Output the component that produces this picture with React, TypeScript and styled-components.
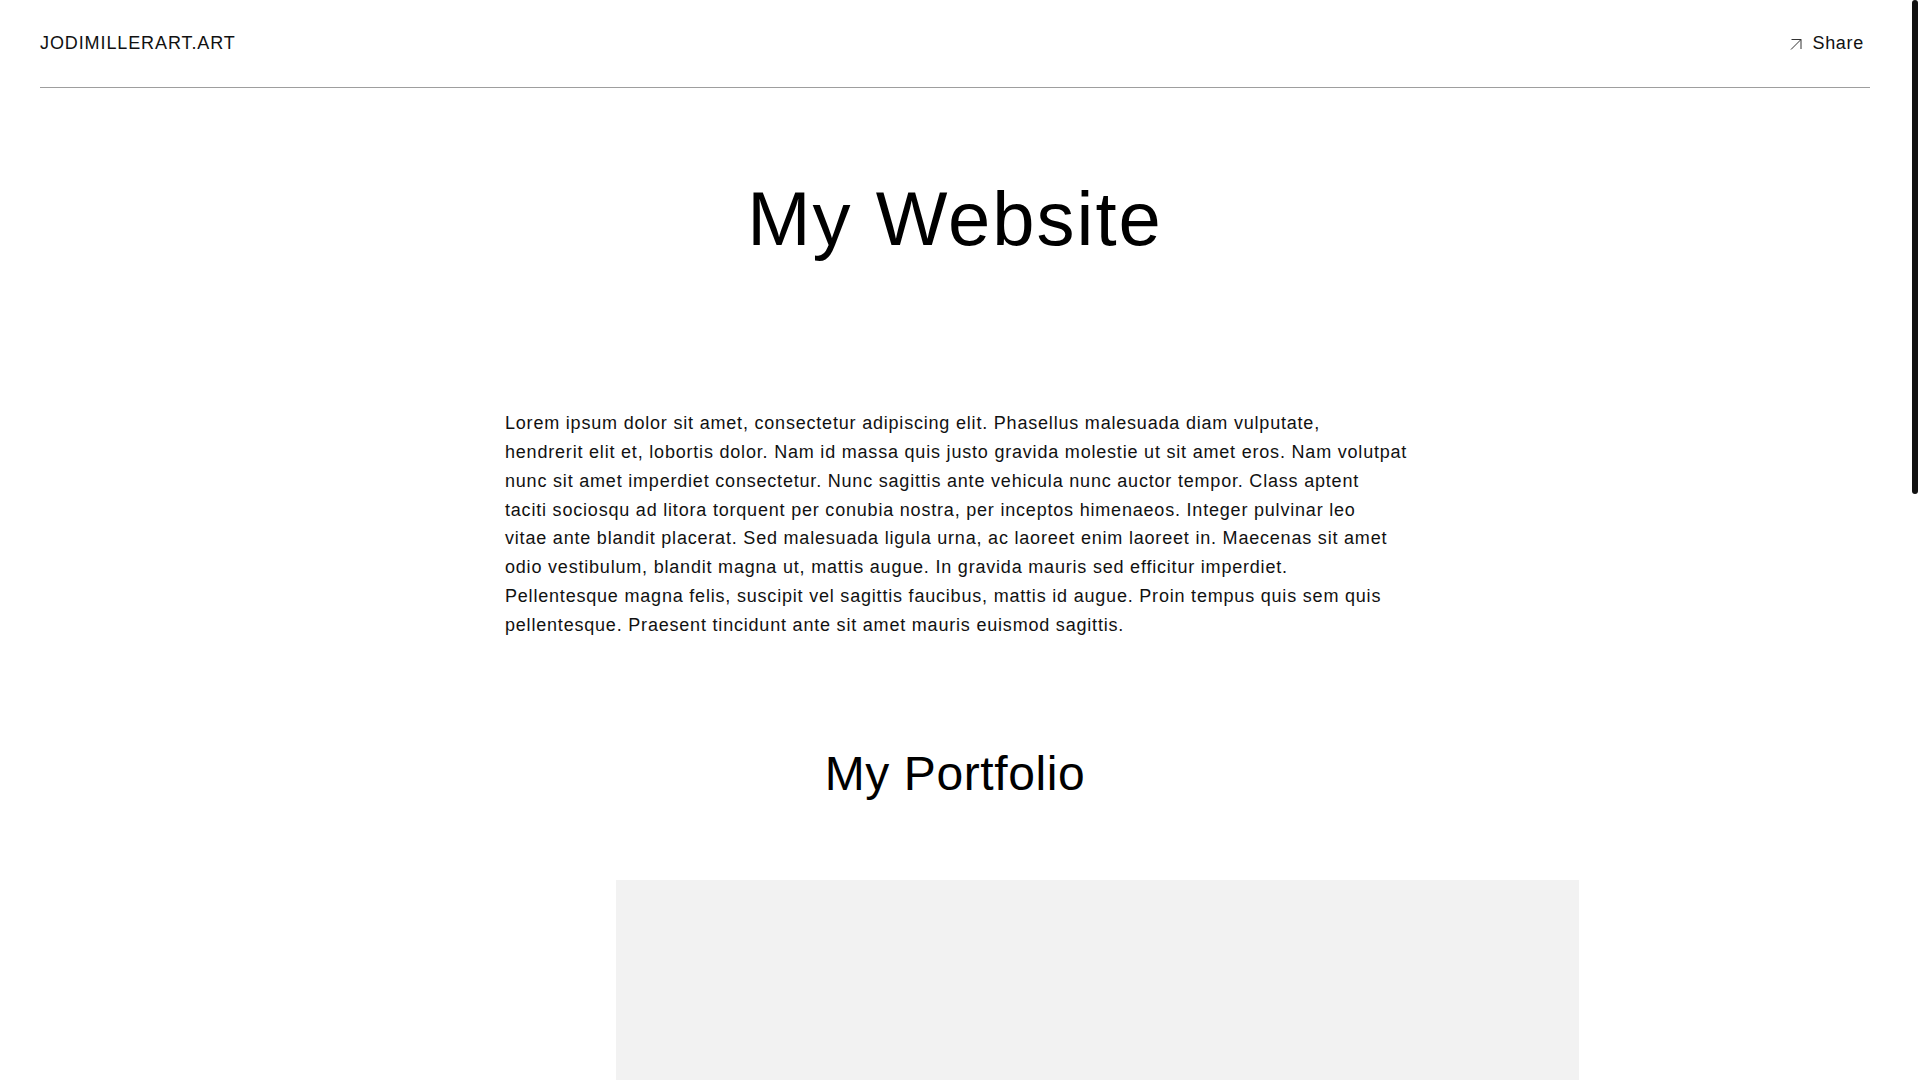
import React from "react";
import styled, { createGlobalStyle } from "styled-components";

const Global = createGlobalStyle`
  html, body { margin: 0; padding: 0; background: #fff; }
  body {
    font-family: "Liberation Sans", Arial, sans-serif;
    color: #000;
    overflow-x: hidden;
  }
  ::-webkit-scrollbar { width: 0; height: 0; }
`;

const Frame = styled.div`
  display: grid;
  grid-template-columns: 1fr 10px;
  width: 100vw;
`;

const ScrollRail = styled.div`
  position: relative;
  background: #fff;
`;

const ScrollThumb = styled.div`
  position: sticky;
  top: 0;
  margin: 0 2px;
  height: 494px;
  border-radius: 3px;
  background: #111;
`;

const Page = styled.div`
  display: flex;
  flex-direction: column;
  min-width: 0;
  padding-bottom: 320px;
`;

const Header = styled.header`
  display: flex;
  align-items: center;
  justify-content: space-between;
  height: 87px;
  margin: 0 40px;
  border-bottom: 1px solid #9e9e9e;
`;

const Logo = styled.a`
  font-size: 18px;
  letter-spacing: 0.9px;
  color: #111;
  text-decoration: none;
  text-transform: uppercase;
`;

const ShareButton = styled.button`
  display: flex;
  align-items: center;
  gap: 10px;
  background: none;
  border: none;
  padding: 0 6px 0 0;
  font-family: inherit;
  font-size: 18px;
  letter-spacing: 0.7px;
  color: #111;
  cursor: pointer;
`;

const Main = styled.main`
  display: flex;
  flex-direction: column;
  align-items: center;
`;

const Title = styled.h1`
  margin: 85px 0 0;
  font-size: 76px;
  font-weight: 400;
  letter-spacing: 2px;
  line-height: 1.2;
  text-align: center;
`;

const Paragraph = styled.p`
  margin: 145px 0 0;
  width: 900px;
  font-size: 18px;
  letter-spacing: 0.8px;
  line-height: 28.8px;
  color: #111;
`;

const Line = styled.span`
  display: block;
  white-space: nowrap;
`;

const SectionTitle = styled.h2`
  margin: 105px 0 0;
  font-size: 48px;
  font-weight: 400;
  letter-spacing: 0.6px;
  line-height: 1.2;
  text-align: center;
`;

const Gallery = styled.section`
  align-self: stretch;
  display: flex;
  padding-left: 616px;
  margin-top: 78px;
`;

const Placeholder = styled.div`
  width: 963px;
  height: 1040px;
  background: #f2f2f2;
`;

const ArrowIcon = () => (
  <svg width="12" height="12" viewBox="0 0 12 12" fill="none" stroke="#333" strokeWidth="1">
    <path d="M1 11.5 L11 1.5" />
    <path d="M1.5 1.5 H11 V11" />
  </svg>
);

const lines = [
  "Lorem ipsum dolor sit amet, consectetur adipiscing elit. Phasellus malesuada diam vulputate,",
  "hendrerit elit et, lobortis dolor. Nam id massa quis justo gravida molestie ut sit amet eros. Nam volutpat",
  "nunc sit amet imperdiet consectetur. Nunc sagittis ante vehicula nunc auctor tempor. Class aptent",
  "taciti sociosqu ad litora torquent per conubia nostra, per inceptos himenaeos. Integer pulvinar leo",
  "vitae ante blandit placerat. Sed malesuada ligula urna, ac laoreet enim laoreet in. Maecenas sit amet",
  "odio vestibulum, blandit magna ut, mattis augue. In gravida mauris sed efficitur imperdiet.",
  "Pellentesque magna felis, suscipit vel sagittis faucibus, mattis id augue. Proin tempus quis sem quis",
  "pellentesque. Praesent tincidunt ante sit amet mauris euismod sagittis.",
];

export default function App() {
  return (
    <>
      <Global />
      <Frame>
        <Page>
          <Header>
            <Logo href="#">jodimillerart.art</Logo>
            <ShareButton>
              <ArrowIcon />
              Share
            </ShareButton>
          </Header>
          <Main>
            <Title>My Website</Title>
            <Paragraph>
              {lines.map((l, i) => (
                <Line key={i}>{l} </Line>
              ))}
            </Paragraph>
            <SectionTitle>My Portfolio</SectionTitle>
            <Gallery>
              <Placeholder />
            </Gallery>
          </Main>
        </Page>
        <ScrollRail>
          <ScrollThumb />
        </ScrollRail>
      </Frame>
    </>
  );
}
